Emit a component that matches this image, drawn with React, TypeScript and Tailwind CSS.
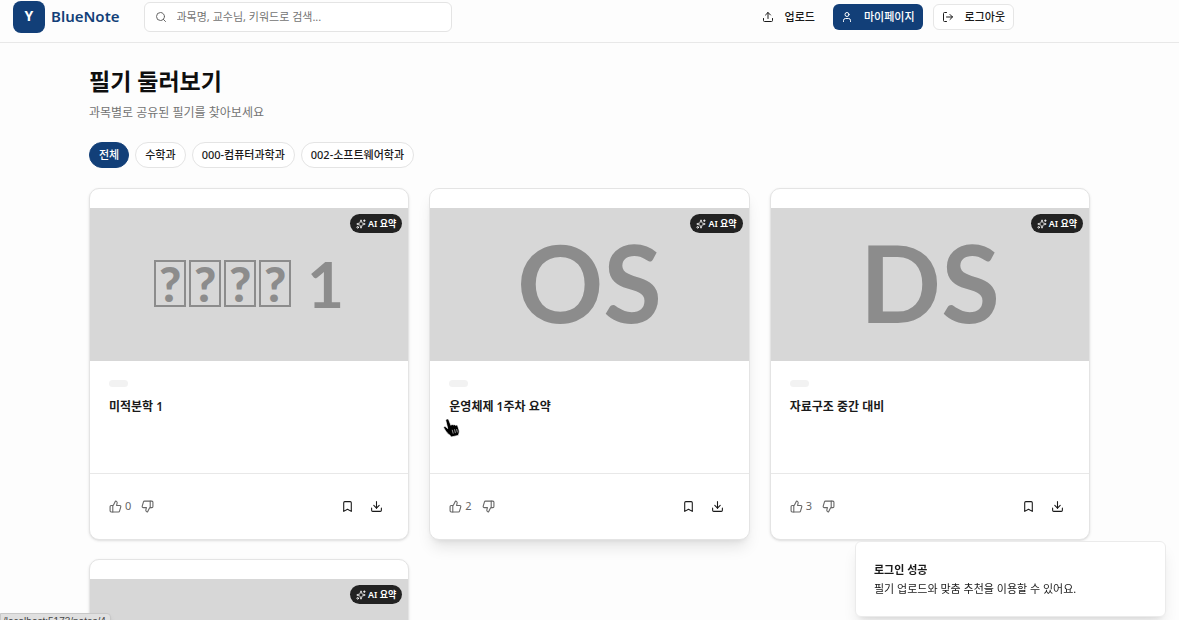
import { useState } from "react";
import { Bookmark, Download, LogOut, Search, Sparkles, ThumbsDown, ThumbsUp, Upload, User } from "lucide-react";
import clsx from "clsx";

type Note = {
  id: number;
  title: string;
  cover: string;
  small?: boolean;
  likes: number;
  raised?: boolean;
};

const CATEGORIES = ["전체", "수학과", "000-컴퓨터과학과", "002-소프트웨어학과"];

const NOTES: Note[] = [
  { id: 1, title: "미적분학 1", cover: "1", small: true, likes: 0 },
  { id: 2, title: "운영체제 1주차 요약", cover: "OS", likes: 2, raised: true },
  { id: 3, title: "자료구조 중간 대비", cover: "DS", likes: 3 },
  { id: 4, title: "", cover: "", likes: 0 },
];

function Header() {
  return (
    <header className="flex items-center justify-between border-b border-[#e8e8e8] pt-px pr-3 pb-[9px] pl-[13px]">
      <div className="flex items-center">
        <a href="#" className="flex items-center gap-1.5">
          <span className="flex size-8 items-center justify-center rounded-lg bg-[#123f78] pb-0.5 text-sm font-bold text-white">Y</span>
          <span className="pb-0.5 text-[15px] leading-6 font-semibold text-[#123f78]">BlueNote</span>
        </a>
        <div className="ml-6 flex h-[30px] w-[308px] items-center gap-2.5 rounded-md border border-[#e4e4e4] bg-white px-2.5">
          <Search size={12} className="shrink-0 text-[#666]" />
          <input
            type="text"
            aria-label="검색"
            placeholder="과목명, 교수님, 키워드로 검색..."
            className="h-5 w-full bg-transparent text-[11px] leading-5 outline-none placeholder:text-[#737373]"
          />
        </div>
      </div>

      <div className="mr-[153px] flex items-center gap-2.5 text-[11px] font-medium text-[#1a1a1a]">
        <button type="button" className="flex h-[26px] items-center gap-[11px] px-2">
          <Upload size={12} />
          업로드
        </button>
        <button type="button" className="flex h-[26px] items-center gap-[11px] rounded-md bg-[#123f78] px-2 text-white">
          <User size={12} />
          마이페이지
        </button>
        <button type="button" className="flex h-[26px] items-center gap-[11px] rounded-md border border-[#e6e6e6] bg-white px-2">
          <LogOut size={12} />
          로그아웃
        </button>
      </div>
    </header>
  );
}

function Cover({ note }: { note: Note }) {
  return (
    <div className="relative flex h-[153px] items-center justify-center bg-[#d7d7d7] font-[Lato,sans-serif] font-bold text-[#8c8c8c]">
      {note.small ? (
        <div className="flex items-center gap-4 pb-0.5 text-[64px] leading-none">
          <span className="flex gap-[3px]">
            {[0, 1, 2, 3].map((i) => (
              <span key={i} className="flex h-[47px] w-8 items-center justify-center border-2 border-[#8c8c8c] text-[48px] leading-none font-black">
                ?
              </span>
            ))}
          </span>
          <span>{note.cover}</span>
        </div>
      ) : (
        <span className="pb-1.5 text-[107px] leading-none">{note.cover}</span>
      )}
      <span className="absolute top-1.5 right-1.5 flex h-[19px] items-center gap-0.5 rounded-full bg-[#222] px-1.5 font-['Noto_Sans','Noto_Sans_CJK_KR',sans-serif] text-[9px] font-semibold text-white">
        <Sparkles size={10} />
        AI 요약
      </span>
    </div>
  );
}

function NoteCard({ note }: { note: Note }) {
  const [likes, setLikes] = useState(note.likes);

  return (
    <article
      className={clsx(
        "flex flex-col overflow-hidden rounded-[10px] border border-[#e4e4e4] bg-white pt-[19px]",
        note.raised ? "shadow-lg" : "shadow-sm",
      )}
    >
      <Cover note={note} />
      <div className="h-28 px-[19px] pt-[19px]">
        <div className="h-[7px] w-[19px] rounded-full bg-[#f2f2f2]" />
        {note.title && <h2 className="mt-2.5 text-xs leading-5 font-semibold text-[#1a1a1a]">{note.title}</h2>}
      </div>
      <div className="flex h-[66px] items-center justify-between border-t border-[#e8e8e8] px-[19px] text-[#666]">
        <div className="flex items-center gap-2.5 text-[11px]">
          <button type="button" aria-label="좋아요" className="flex items-center gap-[3px]" onClick={() => setLikes(likes + 1)}>
            <ThumbsUp size={13} />
            {likes}
          </button>
          <button type="button" aria-label="싫어요">
            <ThumbsDown size={13} />
          </button>
        </div>
        <div className="flex items-center gap-4 pr-1.5 text-[#1a1a1a]">
          <button type="button" aria-label="북마크">
            <Bookmark size={13} />
          </button>
          <button type="button" aria-label="다운로드">
            <Download size={13} />
          </button>
        </div>
      </div>
    </article>
  );
}

function HandPointer() {
  return (
    <svg viewBox="0 0 18 20" className="pointer-events-none absolute top-[418px] left-[443px] h-5 w-[18px]" aria-hidden="true">
      <path
        d="M3.6 1.2c1-.5 1.9 0 2.3 1l2 5.1c.4-.9 1.8-1.1 2.3-.2.7-.7 1.9-.6 2.3.3.9-.6 2-.2 2.3.8l1.2 3.7c.4 1.5.2 2.8-.2 4l-.5 1.5-7.1 1.6-1.4-1.9c-1.6-1-3.1-2.6-4.4-4.6L.8 9.9c-.5-.9.8-1.9 1.8-1.1l2.1 1.8L2.9 3c-.3-.8 0-1.5.7-1.8z"
        fill="#000"
        stroke="#fff"
        strokeWidth="0.7"
      />
      <path d="M9.2 11.8l1 3.8M11.5 11.3l.9 3.8M13.6 11l.8 3.4" stroke="#fff" strokeWidth="0.6" />
    </svg>
  );
}

export default function App() {
  const [active, setActive] = useState("전체");

  return (
    <div className="relative h-screen overflow-hidden bg-[#fdfdfd] font-['Noto_Sans','Noto_Sans_CJK_KR',sans-serif]">
      <Header />
      <main className="mx-auto max-w-[1001px] pt-5">
        <h1 className="text-[23px] leading-9 font-bold text-[#0f0f0f]">필기 둘러보기</h1>
        <p className="mt-1 text-xs leading-5 text-[#737373]">과목별로 공유된 필기를 찾아보세요</p>
        <div className="mt-[19px] flex gap-1.5">
          {CATEGORIES.map((name) => (
            <button
              key={name}
              type="button"
              onClick={() => setActive(name)}
              className={clsx(
                "h-[26px] rounded-full border px-[9px] text-[11px] font-medium",
                active === name ? "border-[#123f78] bg-[#123f78] text-white" : "border-[#e4e4e4] bg-white text-[#1a1a1a]",
              )}
            >
              {name}
            </button>
          ))}
        </div>
        <div className="mt-5 grid grid-cols-3 gap-x-5 gap-y-[19px]">
          {NOTES.map((note) => (
            <NoteCard key={note.id} note={note} />
          ))}
        </div>
      </main>

      <HandPointer />

      <div role="status" className="fixed right-[13px] bottom-[3px] w-[311px] rounded-md border border-[#ebebeb] bg-white p-[18px] text-[11px] leading-[19px] text-[#1a1a1a] shadow-lg">
        <p className="font-semibold">로그인 성공</p>
        <p>필기 업로드와 맞춤 추천을 이용할 수 있어요.</p>
      </div>

      {/* link preview, most of it below the window */}
      <div className="absolute top-[613px] left-0 rounded-tr-sm border border-[#c8c8c8] bg-[#e0e0e0] pr-1 pl-0.5 font-['Liberation_Sans',sans-serif] text-[10px] leading-4 text-[#444] shadow-md">
        /localhost:5173/notes/4
      </div>
    </div>
  );
}
